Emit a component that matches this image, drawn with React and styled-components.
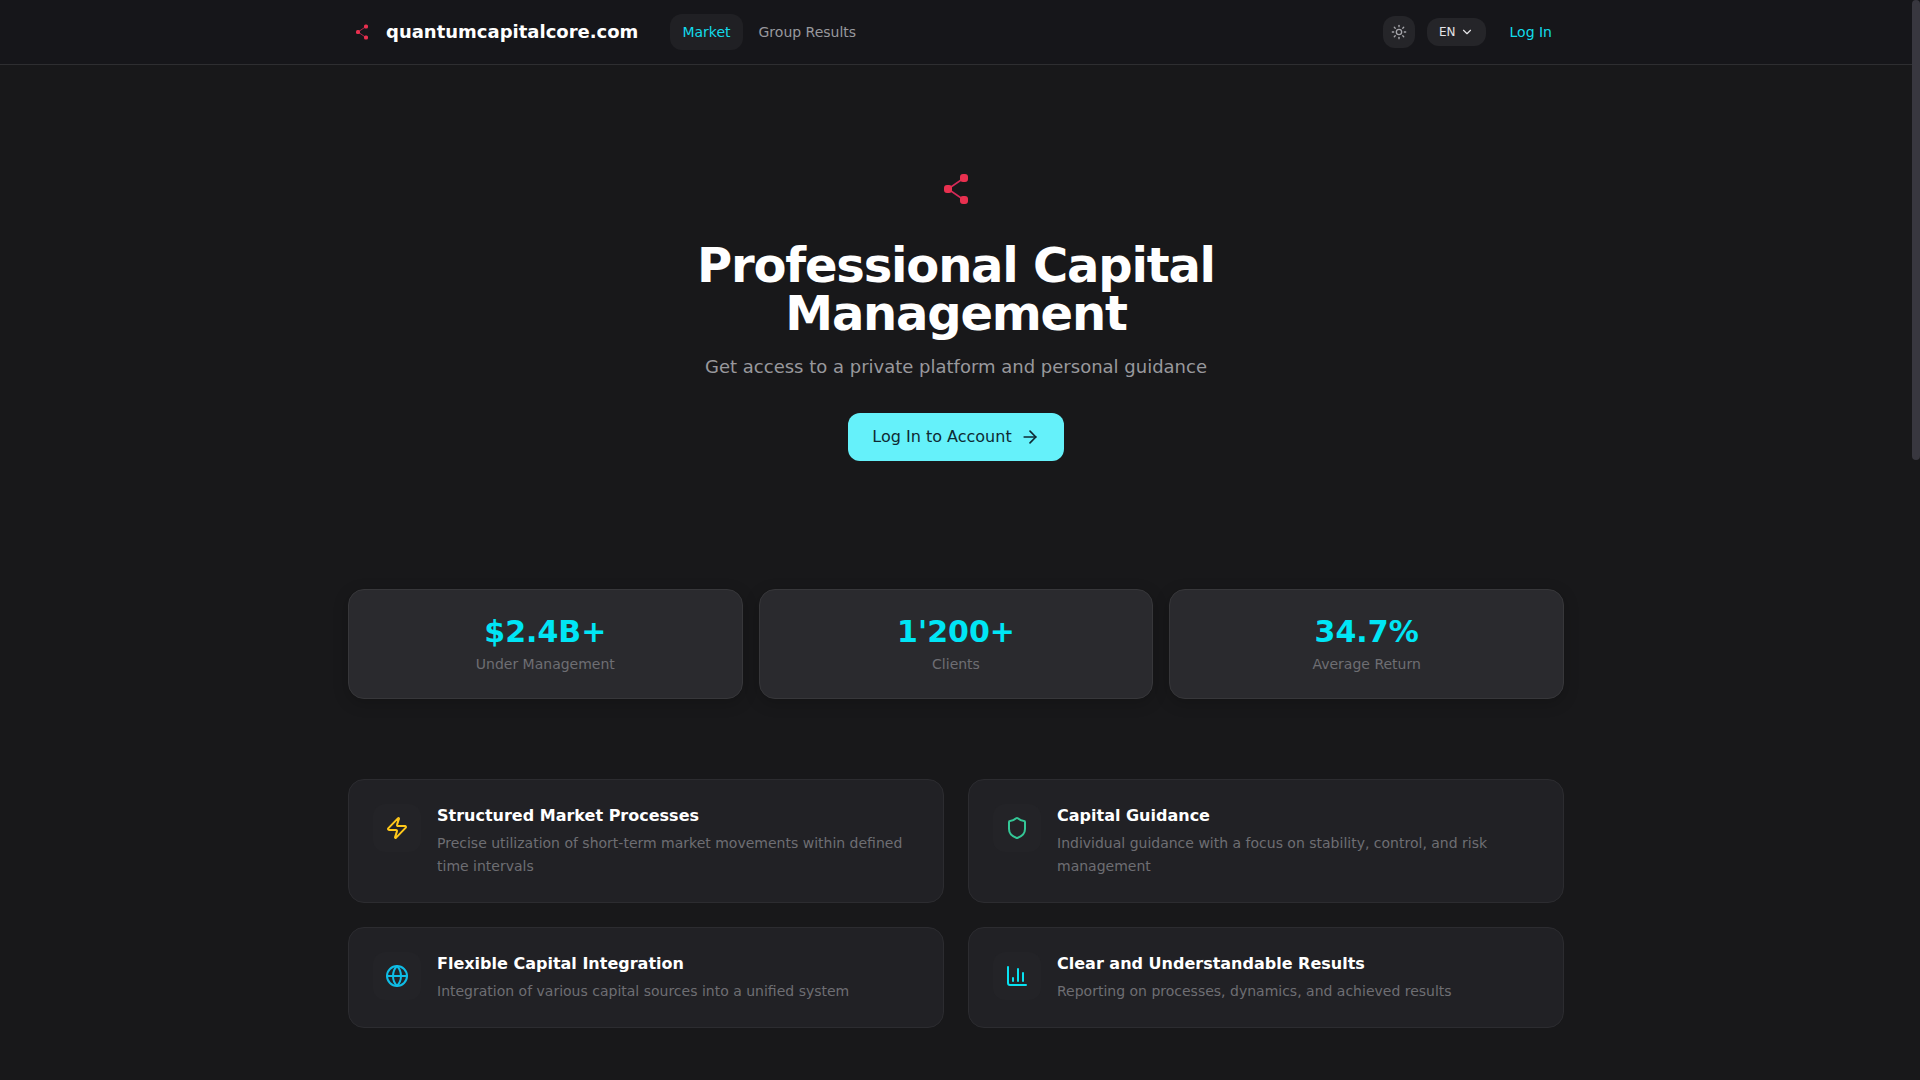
import React from "react";
import styled, { createGlobalStyle } from "styled-components";
import { Sun, ChevronDown, ArrowRight, Zap, Shield, Globe, ChartColumn } from "lucide-react";

const GlobalStyle = createGlobalStyle`
  *, *::before, *::after { box-sizing: border-box; }
  body {
    margin: 0;
    background: #18181a;
    color: #ffffff;
    font-family: "DejaVu Sans", sans-serif;
    font-size: 16px;
    line-height: 24px;
    scrollbar-width: none;
  }
  h1, h2, p, dl, dt, dd, ul { margin: 0; padding: 0; }
  button, a { font: inherit; color: inherit; text-decoration: none; }
  button { border: 0; cursor: pointer; }
`;

const Page = styled.div`
  padding-right: 8px;
  min-height: 100vh;
`;

const ScrollThumb = styled.div`
  position: fixed;
  top: 0;
  right: 0;
  width: 8px;
  height: 460px;
  border-radius: 4px;
  background: #38373f;
`;

const Header = styled.header`
  margin-right: -8px;
  padding-right: 8px;
  background: #16161a;
  border-bottom: 1px solid #2e2e31;
`;

const Container = styled.div`
  max-width: 1280px;
  margin: 0 auto;
  padding: 0 32px;
`;

const Bar = styled(Container)`
  display: flex;
  align-items: center;
  justify-content: space-between;
  height: 64px;
`;

const Group = styled.div`
  display: flex;
  align-items: center;
  gap: ${(p) => p.$gap}px;
`;

const Brand = styled.a`
  display: flex;
  align-items: center;
  gap: 10px;
  && {
    font-size: 18px;
    line-height: 28px;
    font-weight: 700;
  }
`;

const Nav = styled.nav`
  display: flex;
  gap: 4px;
`;

const NavLink = styled.a`
  padding: 8px 12px;
  border-radius: 12px;
  background: ${(p) => (p.$active ? "#202024" : "transparent")};
  && {
    color: ${(p) => (p.$active ? "#12dbea" : "#98989d")};
    font-size: 14px;
    line-height: 20px;
  }
`;

const IconButton = styled.button`
  display: flex;
  align-items: center;
  justify-content: center;
  width: 32px;
  height: 32px;
  padding: 0;
  border-radius: 12px;
  background: #252529;
  && { color: #a4a4a9; }
`;

const LangButton = styled.button`
  display: flex;
  align-items: center;
  gap: 4px;
  height: 28px;
  padding: 0 12px;
  border-radius: 12px;
  background: #252529;
  && {
    color: #e4e4e7;
    font-size: 12px;
    line-height: 16px;
  }
`;

const LoginLink = styled.a`
  padding: 8px 12px;
  && {
    color: #12dbea;
    font-size: 14px;
    line-height: 20px;
  }
`;

const Hero = styled.section`
  display: flex;
  flex-direction: column;
  align-items: center;
  padding: 96px 0 128px;
  text-align: center;
`;

const Title = styled.h1`
  max-width: 672px;
  margin-top: 24px;
  font-size: 48px;
  line-height: 48px;
  font-weight: 700;
  letter-spacing: -0.025em;
`;

const Lead = styled.p`
  margin-top: 16px;
  font-size: 18px;
  line-height: 28px;
  color: #98989d;
`;

const PrimaryLink = styled.a`
  display: flex;
  align-items: center;
  gap: 8px;
  height: 48px;
  margin-top: 32px;
  padding: 0 24px;
  border-radius: 12px;
  background: #65f1fa;
  && { color: #0e2a33; }
`;

const Stats = styled.dl`
  display: grid;
  grid-template-columns: repeat(3, 1fr);
  gap: 16px;
`;

const Stat = styled.div`
  display: flex;
  flex-direction: column-reverse;
  gap: 4px;
  padding: 24px;
  border: 1px solid #37373a;
  border-radius: 16px;
  background: #2a2a2e;
  box-shadow: 0 4px 16px rgba(0, 0, 0, 0.2);
  text-align: center;
`;

const StatValue = styled.dd`
  font-size: 30px;
  line-height: 36px;
  font-weight: 700;
  color: #00e5f5;
`;

const StatLabel = styled.dt`
  font-size: 14px;
  line-height: 20px;
  color: #6e6e73;
`;

const Features = styled.ul`
  display: grid;
  grid-template-columns: repeat(2, 1fr);
  gap: 24px;
  padding: 80px 0 96px;
  list-style: none;
`;

const Feature = styled.li`
  display: flex;
  align-items: flex-start;
  gap: 16px;
  padding: 24px;
  border: 1px solid #2c2c30;
  border-radius: 16px;
  background: #212125;
`;

const FeatureIcon = styled.div`
  display: flex;
  flex: none;
  align-items: center;
  justify-content: center;
  width: 48px;
  height: 48px;
  border-radius: 12px;
  background: #232327;
  color: ${(p) => p.$color};
`;

const FeatureTitle = styled.h2`
  font-size: 16px;
  line-height: 24px;
  font-weight: 700;
`;

const FeatureText = styled.p`
  margin-top: 4px;
  font-size: 14px;
  line-height: 23px;
  color: #6e6e73;
`;

const stats = [
  ["$2.4B+", "Under Management"],
  ["1'200+", "Clients"],
  ["34.7%", "Average Return"],
];

const features = [
  [Zap, "#ffc81a", "Structured Market Processes", "Precise utilization of short-term market movements within defined time intervals"],
  [Shield, "#34c796", "Capital Guidance", "Individual guidance with a focus on stability, control, and risk management"],
  [Globe, "#0fbde6", "Flexible Capital Integration", "Integration of various capital sources into a unified system"],
  [ChartColumn, "#08e2f2", "Clear and Understandable Results", "Reporting on processes, dynamics, and achieved results"],
];

function Logo({ size }) {
  return (
    <svg width={size} height={size} viewBox="0 0 56 56" fill="#e8304f" aria-hidden="true">
      <path d="M36 17 20 28l16 11" fill="none" stroke="#d42a58" strokeWidth="1.6" />
      <rect x="16" y="24" width="8" height="8" rx="3" />
      <rect x="32" y="13" width="8" height="8" rx="3" />
      <rect x="32" y="35" width="8" height="8" rx="3" />
    </svg>
  );
}

export default function App() {
  return (
    <Page>
      <GlobalStyle />
      <Header>
        <Bar>
          <Group $gap={32}>
            <Brand href="#"><Logo size={28} />quantumcapitalcore.com</Brand>
            <Nav>
              <NavLink href="#market" $active>Market</NavLink>
              <NavLink href="#results">Group Results</NavLink>
            </Nav>
          </Group>
          <Group $gap={12}>
            <IconButton type="button" aria-label="Theme"><Sun size={16} /></IconButton>
            <LangButton type="button">EN<ChevronDown size={14} /></LangButton>
            <LoginLink href="#login">Log In</LoginLink>
          </Group>
        </Bar>
      </Header>
      <Container as="main">
        <Hero>
          <Logo size={56} />
          <Title>Professional Capital Management</Title>
          <Lead>Get access to a private platform and personal guidance</Lead>
          <PrimaryLink href="#login">Log In to Account<ArrowRight size={20} /></PrimaryLink>
        </Hero>
        <Stats>
          {stats.map(([value, label]) => (
            <Stat key={label}>
              <StatLabel>{label}</StatLabel>
              <StatValue>{value}</StatValue>
            </Stat>
          ))}
        </Stats>
        <Features>
          {features.map(([Icon, color, title, text]) => (
            <Feature key={title}>
              <FeatureIcon $color={color}><Icon size={24} /></FeatureIcon>
              <div>
                <FeatureTitle>{title}</FeatureTitle>
                <FeatureText>{text}</FeatureText>
              </div>
            </Feature>
          ))}
        </Features>
      </Container>
      <ScrollThumb />
    </Page>
  );
}
